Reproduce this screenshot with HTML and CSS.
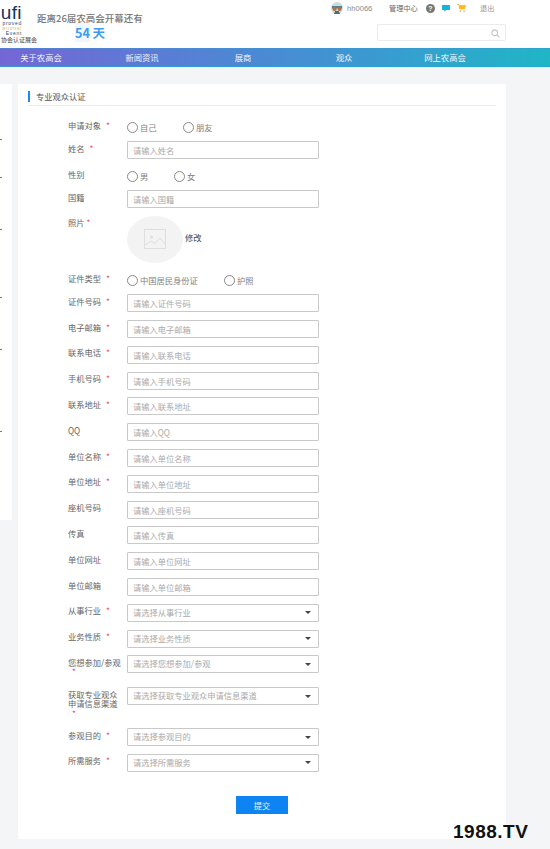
FILE: index.html
```html
<!DOCTYPE html>
<html lang="zh-CN">
<head>
<meta charset="utf-8">
<title>专业观众认证</title>
<link rel="stylesheet" href="styles.css">
</head>
<body>
<header class="header">
  <div class="logo">
    <div class="logo-ufi">ufi</div>
    <div class="logo-line">proved</div>
    <div class="logo-line logo-yellow">ational</div>
    <div class="logo-line">Event</div>
    <div class="logo-cn">协会认证展会</div>
  </div>
  <div class="countdown">
    <div class="countdown-title">距离26届农高会开幕还有</div>
    <div class="countdown-days"><span class="countdown-num">54</span> 天</div>
  </div>
  <div class="header-right">
    <div class="userbar">
      <svg class="avatar" viewBox="0 0 12 12" width="12" height="12"><circle cx="6" cy="6" r="6" fill="#c9dde0"/><path d="M1 4h10v2.5H1z" fill="#5d7f88"/><circle cx="3.6" cy="7" r="2" fill="#b9703c"/><circle cx="8.6" cy="7" r="2" fill="#b9703c"/><path d="M3 12l1.2-3h3.6L9 12z" fill="#4f6f78"/></svg>
      <span class="user-name">hh0066</span>
      <span class="user-link">管理中心</span>
      <span class="help">?</span>
      <svg class="chat" viewBox="0 0 9 8" width="8" height="7"><path d="M0 0h9v5.6H4.6L2.6 8V5.6H0z" fill="#12b5d8"/></svg>
      <svg class="cart" viewBox="0 0 10 9" width="9" height="8"><path d="M0 .5h2l1 5h5.4L9.6 1.6H2.6" fill="#fbb829" stroke="#fbb829"/><circle cx="3.6" cy="7.9" r="1" fill="#fbb829"/><circle cx="7.9" cy="7.9" r="1" fill="#fbb829"/></svg>
      <span class="logout">退出</span>
    </div>
    <div class="search">
      <svg viewBox="0 0 10 10" width="9" height="9"><circle cx="4.2" cy="4.2" r="3.2" fill="none" stroke="#c4c4c4" stroke-width="1.2"/><path d="M6.6 6.6L9.4 9.4" stroke="#c4c4c4" stroke-width="1.3"/></svg>
    </div>
  </div>
</header>
<nav class="nav">
  <div class="nav-inner">
    <a class="nav-item">关于农高会</a>
    <a class="nav-item">新闻资讯</a>
    <a class="nav-item">展商</a>
    <a class="nav-item">观众</a>
    <a class="nav-item">网上农高会</a>
  </div>
</nav>
<main class="main">
  <aside class="sidebar">
    <i class="mark m1"></i><i class="mark m3"></i><i class="mark m2"></i><i class="mark m4"></i><i class="mark m2"></i><i class="mark m5"></i>
  </aside>
  <section class="card">
    <h2 class="card-title">专业观众认证</h2>
    <form class="form">
      <div class="row row-radio"><label class="lab">申请对象<b>*</b></label>
        <div class="radios"><span class="radio r-self"><i></i><em>自己</em></span><span class="radio"><i></i><em>朋友</em></span></div></div>
      <div class="row"><label class="lab">姓名<b>*</b></label><input class="ctl" placeholder="请输入姓名"></div>
      <div class="row row-radio"><label class="lab">性别</label>
        <div class="radios"><span class="radio r-male"><i></i><em>男</em></span><span class="radio"><i></i><em>女</em></span></div></div>
      <div class="row"><label class="lab">国籍</label><input class="ctl" placeholder="请输入国籍"></div>
      <div class="row row-photo"><label class="lab">照片<b class="near">*</b></label>
        <div class="photo"><svg viewBox="0 0 22 20" width="22" height="20"><rect x=".5" y=".5" width="21" height="19" fill="none" stroke="#dedede"/><circle cx="7.5" cy="8" r="1.6" fill="#dedede"/><path d="M1 16l6-4 4 2.6 5-5.6 5 6" fill="none" stroke="#dedede"/></svg></div>
        <span class="edit">修改</span></div>
      <div class="row row-radio"><label class="lab">证件类型<b>*</b></label>
        <div class="radios"><span class="radio r-id"><i></i><em>中国居民身份证</em></span><span class="radio"><i></i><em>护照</em></span></div></div>
      <div class="row"><label class="lab">证件号码<b>*</b></label><input class="ctl" placeholder="请输入证件号码"></div>
      <div class="row"><label class="lab">电子邮箱<b>*</b></label><input class="ctl" placeholder="请输入电子邮箱"></div>
      <div class="row"><label class="lab">联系电话<b>*</b></label><input class="ctl" placeholder="请输入联系电话"></div>
      <div class="row"><label class="lab">手机号码<b>*</b></label><input class="ctl" placeholder="请输入手机号码"></div>
      <div class="row"><label class="lab">联系地址<b>*</b></label><input class="ctl" placeholder="请输入联系地址"></div>
      <div class="row"><label class="lab">QQ</label><input class="ctl" placeholder="请输入QQ"></div>
      <div class="row"><label class="lab">单位名称<b>*</b></label><input class="ctl" placeholder="请输入单位名称"></div>
      <div class="row"><label class="lab">单位地址<b>*</b></label><input class="ctl" placeholder="请输入单位地址"></div>
      <div class="row"><label class="lab">座机号码</label><input class="ctl" placeholder="请输入座机号码"></div>
      <div class="row"><label class="lab">传真</label><input class="ctl" placeholder="请输入传真"></div>
      <div class="row"><label class="lab">单位网址</label><input class="ctl" placeholder="请输入单位网址"></div>
      <div class="row"><label class="lab">单位邮箱</label><input class="ctl" placeholder="请输入单位邮箱"></div>
      <div class="row"><label class="lab">从事行业<b>*</b></label><div class="ctl sel">请选择从事行业</div></div>
      <div class="row"><label class="lab">业务性质<b>*</b></label><div class="ctl sel">请选择业务性质</div></div>
      <div class="row row-two"><label class="lab">您想参加/参观<b class="drop">*</b></label><div class="ctl sel">请选择您想参加/参观</div></div>
      <div class="row row-three"><label class="lab">获取专业观众申请信息渠道<b class="drop">*</b></label><div class="ctl sel">请选择获取专业观众申请信息渠道</div></div>
      <div class="row"><label class="lab">参观目的<b>*</b></label><div class="ctl sel">请选择参观目的</div></div>
      <div class="row"><label class="lab">所需服务<b>*</b></label><div class="ctl sel">请选择所需服务</div></div>
      <div class="actions"><button class="submit" type="button">提交</button></div>
    </form>
  </section>
</main>
<div class="watermark">1988.TV</div>
</body>
</html>
```
FILE: styles.css
```css
* { box-sizing: border-box; }
html, body { margin: 0; padding: 0; }
body {
  position: relative;
  width: 550px;
  height: 849px;
  overflow: hidden;
  background: #f4f5f7;
  font-family: "Noto Sans CJK SC", "Liberation Sans", sans-serif;
  font-size: 8.25px;
  color: #555;
}

/* header */
.header { display: flex; height: 48px; background: #fff; }
.logo { width: 37px; flex: none; padding-top: 5px; text-align: right; overflow: hidden; font-family: "Liberation Sans", sans-serif; }
.logo-ufi { padding-right: 15px; font-size: 19px; line-height: 16px; color: #15325f; letter-spacing: .4px; }
.logo-line { padding-right: 15px; font-size: 5px; line-height: 5px; letter-spacing: .7px; color: #2c4a70; }
.logo-yellow { color: #d9c15a; }
.logo-cn { height: 8px; font-family: "Noto Sans CJK SC", sans-serif; font-size: 6px; line-height: 8px; white-space: nowrap; color: #444; }
.countdown { padding-top: 12px; width: 120px; }
.countdown-title { font-size: 9.5px; line-height: 13px; font-weight: 500; color: #777; white-space: nowrap; }
.countdown-days { padding-left: 38px; font-size: 12.5px; line-height: 15px; font-weight: 700; color: #3d9bf0; }
.countdown-num { background: #eef6fe; }
.header-right { margin-left: auto; width: 219px; padding-right: 44px; display: flex; flex-direction: column; align-items: flex-end; }
.userbar { display: flex; align-items: center; height: 16px; width: 176px; flex: none; margin-right: -1px; font-size: 7.2px; color: #666; }
.avatar { flex: none; }
.user-name { margin-left: 4px; width: 42px; font-family: "Liberation Sans", sans-serif; font-size: 7.6px; color: #888; }
.user-link { width: 37px; color: #666; }
.help { width: 9px; height: 9px; border-radius: 50%; background: #777; color: #fff; font: 700 7px/9px "Liberation Sans", sans-serif; text-align: center; }
.chat { margin-left: 7px; flex: none; }
.cart { margin-left: 7px; flex: none; }
.logout { margin-left: 14px; color: #999; }
.search { margin-top: 8px; width: 129px; height: 17px; padding: 4px 5px 0 0; border: 1px solid #ebebeb; border-radius: 2px; background: #fff; text-align: right; }
.search svg { display: inline-block; vertical-align: top; }

/* nav */
.nav { height: 19px; background: linear-gradient(90deg, #7566d6 0%, #4f86d4 42%, #3f95d2 62%, #1fb6c6 100%); border-top: 1px solid rgba(60,150,210,.5); border-bottom: 1px solid rgba(30,170,210,.7); }
.nav-inner { display: grid; grid-template-columns: repeat(5, 101px); margin-left: -9.5px; }
.nav-item { text-align: center; font-size: 8.3px; line-height: 17px; color: #eef4fb; }

/* main */
.main { display: flex; align-items: flex-start; gap: 6px; padding-top: 17px; }
.sidebar { flex: none; width: 12px; height: 436px; padding-top: 55px; background: #fff; }
.mark { display: block; width: 2px; height: 1px; background: #777; }
.m2 { margin-top: 51px; }
.m3 { margin-top: 37px; }
.m4 { margin-top: 67px; }
.m5 { margin-top: 81px; }
.card { flex: none; width: 488px; height: 755px; background: #fff; padding: 7px 10px 0; }
.card-title { margin: 0; height: 11px; padding-left: 6px; border-left: 2px solid #1a8cf0; font-size: 8.25px; line-height: 11px; font-weight: 400; color: #555; }
.form { margin-top: 3px; padding: 12.7px 0 0 40px; border-top: 1px solid #ececec; }

/* rows */
.row { display: flex; align-items: flex-start; margin-bottom: 7.8px; }
.row-radio { height: 15px; }
.row-photo { height: 47.8px; }
.row-two { height: 24.2px; }
.row-three { height: 32.9px; }
.lab { flex: none; width: 59px; padding: 2.5px 5px 0 0; line-height: 9.3px; color: #666; }
.lab b { margin-left: 5px; font-weight: 400; color: #f0506e; }
.lab b.near { margin-left: 2px; }
.lab b.drop { display: block; margin-left: 4px; }
.ctl {
  display: block;
  width: 192px;
  height: 18px;
  padding: 0 5px;
  border: 1px solid #c9c9c9;
  border-radius: 1px;
  background: #fff;
  font: inherit;
  line-height: 15px;
  outline: 0;
}
.ctl::placeholder { color: #aaa; opacity: 1; }
.sel { position: relative; color: #aaa; }
.sel::after { content: ""; position: absolute; top: 6.5px; right: 7px; border: 3px solid transparent; border-top-color: #444; border-bottom: 0; }

/* radios */
.radios { display: flex; padding-top: 3.8px; }
.radio { display: flex; align-items: flex-start; height: 11px; color: #808080; }
.radio i { width: 11px; height: 11px; margin-right: 2px; border: 1px solid #888; border-radius: 50%; background: #fff; }
.radio em { font-style: normal; line-height: 10px; }
.r-self { width: 56px; }
.r-male { width: 47px; }
.r-id { width: 97px; }

/* photo */
.photo { display: flex; align-items: center; justify-content: center; width: 56px; height: 47px; border-radius: 50%; background: #f3f3f3; }
.edit { margin: 17.5px 0 0 2px; line-height: 9.3px; color: #444; }

/* submit */
.actions { margin-top: 24.5px; padding-right: 40px; display: flex; justify-content: center; }
.submit { width: 52px; height: 18px; padding: 0; border: 0; background: #0d84f2; color: #e6f2ff; font: inherit; line-height: 18px; }

.watermark { position: absolute; left: 453px; top: 822px; font: 700 19px/20px "Liberation Sans", sans-serif; letter-spacing: .5px; color: #111; }
```
